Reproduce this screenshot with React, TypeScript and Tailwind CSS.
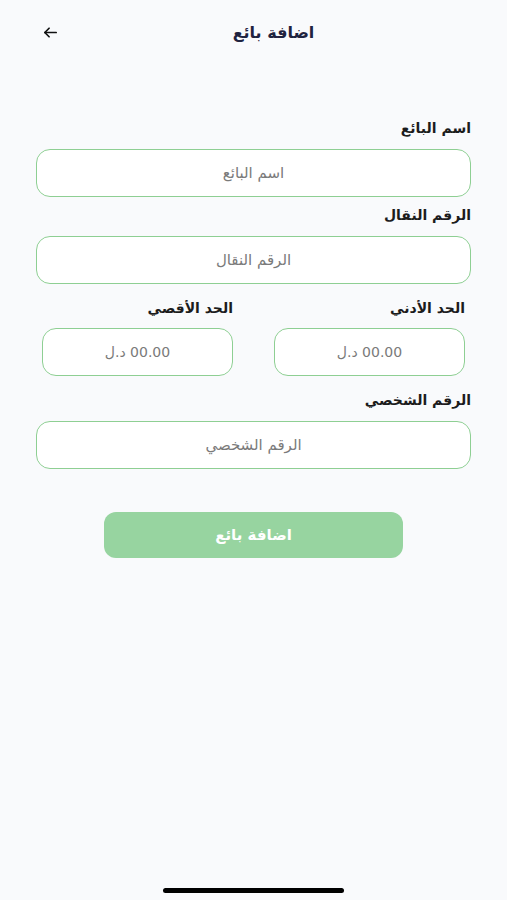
export default function App() {
  const font = { fontFamily: '"DejaVu Sans", "Noto Sans", sans-serif' };
  return (
    <div
      dir="rtl"
      style={font}
      className="min-h-[900px] w-full bg-[#f9fafc] flex flex-col relative"
    >
      {/* Header */}
      <div className="h-[66px] flex items-center justify-center relative pl-[40px]">
        <h1 className="text-[16px] font-bold text-[#1f2340]">اضافة بائع</h1>
        <button className="absolute left-[42px] top-[24px] text-[#111]">
          <svg width="17" height="17" viewBox="0 0 24 24" fill="none" stroke="currentColor" strokeWidth="2.4" strokeLinecap="round" strokeLinejoin="round">
            <path d="M20 12H4" />
            <path d="M10 6l-6 6 6 6" />
          </svg>
        </button>
      </div>

      {/* Form */}
      <div className="px-[36px] pt-[52px] flex flex-col">
        <label className="text-[14px] font-bold text-[#1c1c1c] mb-[10px]">اسم البائع</label>
        <div className="h-[48px] rounded-[14px] border-[1.5px] border-[#8ecf93] bg-white flex items-center justify-center text-[15px] text-[#7a7a7a]">
          اسم البائع
        </div>

        <label className="text-[14px] font-bold text-[#1c1c1c] mt-[8px] mb-[10px]">الرقم النقال</label>
        <div className="h-[48px] rounded-[14px] border-[1.5px] border-[#8ecf93] bg-white flex items-center justify-center text-[15px] text-[#7a7a7a]">
          الرقم النقال
        </div>

        <div className="px-[6px] mt-[14px] flex gap-[41px]">
          <div className="flex-1 flex flex-col">
            <label className="text-[14px] font-bold text-[#1c1c1c] mb-[9px]">الحد الأدني</label>
            <div className="h-[48px] rounded-[14px] border-[1.5px] border-[#8ecf93] bg-white flex items-center justify-center text-[14px] text-[#7a7a7a]">
              00.00 د.ل
            </div>
          </div>
          <div className="flex-1 flex flex-col">
            <label className="text-[14px] font-bold text-[#1c1c1c] mb-[9px]">الحد الأقصي</label>
            <div className="h-[48px] rounded-[14px] border-[1.5px] border-[#8ecf93] bg-white flex items-center justify-center text-[14px] text-[#7a7a7a]">
              00.00 د.ل
            </div>
          </div>
        </div>

        <label className="text-[14px] font-bold text-[#1c1c1c] mt-[14px] mb-[10px]">الرقم الشخصي</label>
        <div className="h-[48px] rounded-[14px] border-[1.5px] border-[#8ecf93] bg-white flex items-center justify-center text-[15px] text-[#7a7a7a]">
          الرقم الشخصي
        </div>

        <div className="flex justify-center mt-[43px]">
          <button className="w-[299px] h-[46px] rounded-[12px] bg-[#97d4a0] text-white text-[15px] font-bold">
            اضافة بائع
          </button>
        </div>
      </div>

      {/* Home indicator */}
      <div className="absolute bottom-[7px] left-0 right-0 flex justify-center">
        <div className="w-[181px] h-[5px] rounded-full bg-black" />
      </div>
    </div>
  );
}
